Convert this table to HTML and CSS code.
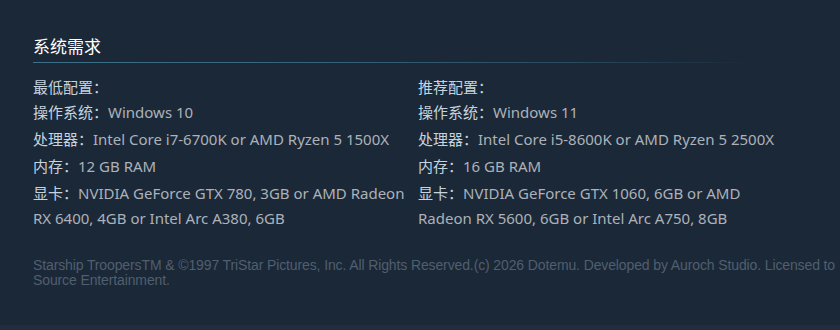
FILE: index.html
```html
<!DOCTYPE html>
<html lang="zh-CN">
<head>
<meta charset="utf-8">
<title>系统需求</title>
<link rel="stylesheet" href="styles.css">
</head>
<body>
<div class="page">
  <h2 class="title">系统需求</h2>
  <div class="sysreq">
    <div class="col">
      <div class="col-head">最低配置：</div>
      <ul class="reqs">
        <li><span class="lbl">操作系统：</span>Windows 10</li>
        <li><span class="lbl">处理器：</span>Intel Core i7-6700K or AMD Ryzen 5 1500X</li>
        <li><span class="lbl">内存：</span>12 GB RAM</li>
        <li><span class="lbl">显卡：</span>NVIDIA GeForce GTX 780, 3GB or AMD Radeon RX 6400, 4GB or Intel Arc A380, 6GB</li>
      </ul>
    </div>
    <div class="col">
      <div class="col-head">推荐配置：</div>
      <ul class="reqs">
        <li><span class="lbl">操作系统：</span>Windows 11</li>
        <li><span class="lbl">处理器：</span>Intel Core i5-8600K or AMD Ryzen 5 2500X</li>
        <li><span class="lbl">内存：</span>16 GB RAM</li>
        <li><span class="lbl">显卡：</span>NVIDIA GeForce GTX 1060, 6GB or AMD Radeon RX 5600, 6GB or Intel Arc A750, 8GB</li>
      </ul>
    </div>
  </div>
  <p class="legal">Starship TroopersTM &amp; ©1997 TriStar Pictures, Inc. All Rights Reserved.(c) 2026 Dotemu. Developed by Auroch Studio. Licensed to Source Entertainment.</p>
</div>
<div class="bottom-strip"></div>
</body>
</html>
```

FILE: styles.css
```css
html, body {
  margin: 0;
  padding: 0;
  background: #1b2838;
}
body {
  width: 840px;
  height: 330px;
  overflow: hidden;
  display: flex;
  flex-direction: column;
  font-family: "Noto Sans", "Noto Sans CJK SC", sans-serif;
}
.page {
  flex: 1;
  padding: 34px 0 0 33px;
}
.title {
  margin: 0;
  width: 720px;
  font-size: 17px;
  font-weight: normal;
  line-height: 24px;
  color: #ffffff;
  font-family: "Noto Sans CJK SC", sans-serif;
  padding-bottom: 4px;
  border-bottom: 1px solid transparent;
  border-image: linear-gradient(to right, #3e7089 0%, #35637c 40%, #2a4a5e 75%, rgba(27,40,56,0) 100%) 1;
}
.sysreq {
  display: grid;
  grid-template-columns: 378px 378px;
  column-gap: 7px;
  margin-top: 11px;
  font-size: 15px;
  line-height: 25px;
  color: #acb2b8;
}
.col-head {
  color: #c6d4df;
  font-family: "Noto Sans CJK SC", sans-serif;
}
.reqs {
  list-style: none;
  margin: 0;
  padding: 0;
}
.reqs li {
  margin-bottom: 1px;
}
.lbl {
  color: #c6d4df;
  font-family: "Noto Sans CJK SC", sans-serif;
}
.legal {
  margin: 26px 0 0 0;
  width: 806px;
  font-family: "Liberation Sans", Arial, sans-serif;
  font-size: 14px;
  letter-spacing: -0.12px;
  line-height: 15px;
  color: #505f6e;
}
.bottom-strip {
  height: 5px;
  background: #202d3d;
}
```
